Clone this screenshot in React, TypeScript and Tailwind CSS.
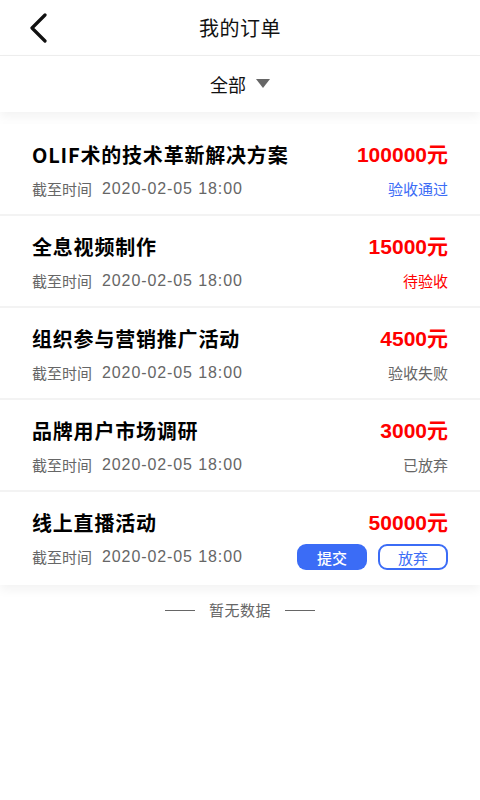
import React from "react";

type Order = {
  title: string;
  price: string;
  status?: string;
  statusColor?: string;
  actions?: boolean;
};

const orders: Order[] = [
  { title: "OLIF术的技术革新解决方案", price: "100000元", status: "验收通过", statusColor: "text-[#3b6cf6]" },
  { title: "全息视频制作", price: "15000元", status: "待验收", statusColor: "text-[#f00]" },
  { title: "组织参与营销推广活动", price: "4500元", status: "验收失败", statusColor: "text-[#666]" },
  { title: "品牌用户市场调研", price: "3000元", status: "已放弃", statusColor: "text-[#666]" },
  { title: "线上直播活动", price: "50000元", actions: true },
];

const font = { fontFamily: '"Noto Sans CJK SC", "Noto Sans", sans-serif' };

const OrderRow = ({ order, last }: { order: Order; last: boolean }) => (
  <div className={`px-8 pt-[17px] ${last ? "pb-[15px]" : "pb-[12px] border-b-2 border-[#f3f3f3]"}`}>
    <div className="flex items-center justify-between h-[28px]">
      <span className="text-[20px] font-bold text-black leading-[28px] tracking-[0.8px]">{order.title}</span>
      <span
        className="text-[21px] font-bold text-[#f00] leading-[28px]"
        style={{ fontFamily: '"Liberation Sans", "Noto Sans CJK SC", sans-serif' }}
      >
        {order.price}
      </span>
    </div>
    <div className="flex items-center justify-between h-[26px] mt-[7px]">
      <span className="text-[15px] text-[#666] leading-[20px] flex items-center">
        截至时间
        <span className="ml-[10px] text-[16px] tracking-[0.9px]" style={{ fontFamily: '"Liberation Sans", sans-serif' }}>
          2020-02-05 18:00
        </span>
      </span>
      {order.actions ? (
        <div className="flex gap-[11px]">
          <button className="w-[70px] h-[26px] rounded-[9px] bg-[#3b6cf6] text-white text-[15px] font-medium leading-none">
            提交
          </button>
          <button className="w-[70px] h-[26px] rounded-[9px] border-2 border-[#3b6cf6] text-[#3b6cf6] text-[15px] leading-none">
            放弃
          </button>
        </div>
      ) : (
        <span className={`text-[15px] leading-[20px] ${order.statusColor}`}>{order.status}</span>
      )}
    </div>
  </div>
);

export default function App() {
  return (
    <div className="w-[480px] h-[800px] bg-white overflow-hidden" style={font}>
      <header className="relative h-[56px] flex items-center justify-center border-b border-[#eeeeee]">
        <svg className="absolute left-[28px] top-[13px]" width="22" height="30" viewBox="0 0 22 30" fill="none">
          <polyline points="17,2 4,15 17,28" stroke="#111" strokeWidth="3.2" strokeLinecap="round" strokeLinejoin="round" />
        </svg>
        <h1 className="text-[20px] text-[#111] leading-none tracking-[0.5px]">我的订单</h1>
      </header>
      <div className="h-[56px] flex items-center justify-center gap-[10px] bg-white shadow-[0_5px_10px_rgba(0,0,0,0.05)] relative">
        <span className="text-[18px] text-[#111] leading-none">全部</span>
        <svg width="14" height="10" viewBox="0 0 14 10">
          <polygon points="0,0 14,0 7,9" fill="#666" />
        </svg>
      </div>
      <div className="mt-[12px] bg-white shadow-[0_5px_10px_rgba(0,0,0,0.05)]">
        {orders.map((o, i) => (
          <OrderRow key={o.title} order={o} last={i === orders.length - 1} />
        ))}
      </div>
      <div className="flex items-center justify-center gap-[14px] mt-[15px]">
        <div className="w-[30px] h-px bg-[#666]" />
        <span className="text-[15px] text-[#666] leading-[20px] tracking-[0.5px]">暂无数据</span>
        <div className="w-[30px] h-px bg-[#666]" />
      </div>
    </div>
  );
}
